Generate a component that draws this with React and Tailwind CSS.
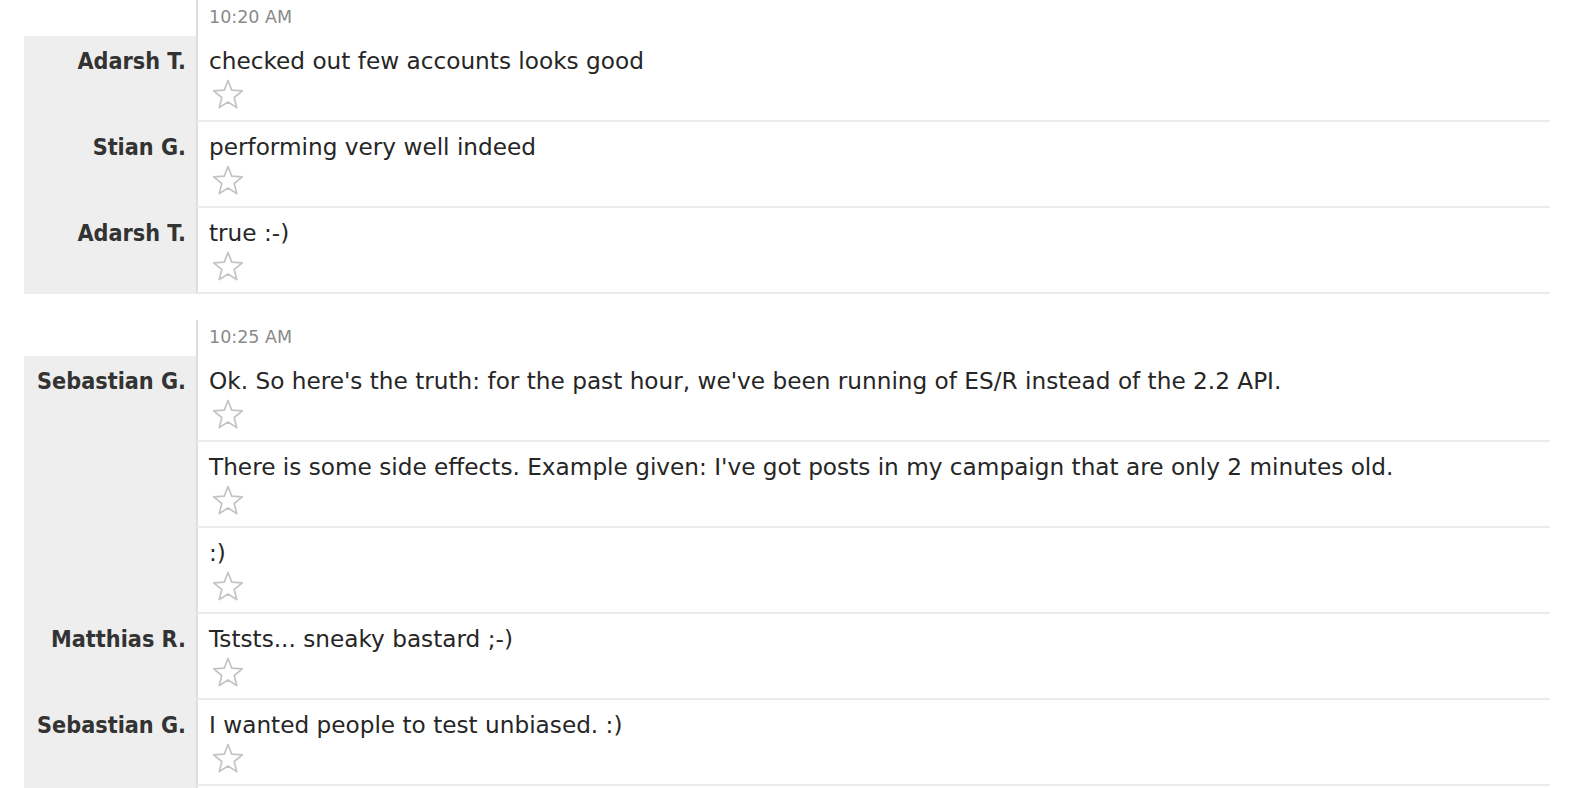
import React from 'react';

const groups = [
  {
    time: '10:20 AM',
    rows: [
      { name: 'Adarsh T.', text: 'checked out few accounts looks good' },
      { name: 'Stian G.', text: 'performing very well indeed' },
      { name: 'Adarsh T.', text: 'true :-)' },
    ],
  },
  {
    time: '10:25 AM',
    rows: [
      { name: 'Sebastian G.', text: "Ok. So here's the truth: for the past hour, we've been running of ES/R instead of the 2.2 API." },
      { name: '', text: "There is some side effects. Example given: I've got posts in my campaign that are only 2 minutes old." },
      { name: '', text: ':)' },
      { name: 'Matthias R.', text: 'Tststs... sneaky bastard ;-)' },
      { name: 'Sebastian G.', text: 'I wanted people to test unbiased. :)' },
      { name: '', text: '' },
    ],
  },
];

const Star = () => (
  <svg width="32" height="30" viewBox="0 0 32 30" className="block">
    <polygon
      points="16,1.5 19.8,11.2 30.3,11.9 22.2,18.5 24.8,28.6 16,23 7.2,28.6 9.8,18.5 1.7,11.9 12.2,11.2"
      fill="#fff"
      stroke="#c3c3c3"
      strokeWidth="1.7"
      strokeLinejoin="round"
    />
  </svg>
);

const App = () => {
  return (
    <div className="h-[788px] overflow-hidden bg-white font-['DejaVu_Sans',Verdana,sans-serif]">
      <div className="ml-[24px] w-[1526px]">
        {groups.map((group, gi) => (
          <div key={gi} className={gi > 0 ? 'mt-[26px]' : ''}>
            {/* time stamp */}
            <div className="flex h-[36px]">
              <div className="w-[172px] shrink-0" />
              <div className="flex-1 border-l-2 border-[#dedede] pl-[11px] pt-[7px] text-[17.5px] leading-[20px] text-[#8a8a8a]">
                {group.time}
              </div>
            </div>

            {group.rows.map((row, ri) => (
              <div key={ri} className="flex">
                <div className="w-[172px] shrink-0 whitespace-nowrap bg-[#eeeeee] pr-[10px] pt-[11px] text-right font-['DejaVu_Sans_Condensed','DejaVu_Sans',sans-serif] text-[23.2px] font-bold leading-[28px] text-[#333333]">
                  {row.name}
                </div>
                <div className="flex-1 border-l-2 border-b-2 border-l-[#dedede] border-b-[#ececec] pl-[11px] pt-[11px] pb-[11px]">
                  <p className="h-[28px] whitespace-nowrap text-[23.2px] leading-[28px] text-[#262626]">{row.text}</p>
                  <div className="ml-[3px] mt-[4px]">
                    <Star />
                  </div>
                </div>
              </div>
            ))}
          </div>
        ))}
      </div>
    </div>
  );
};

export default App;
